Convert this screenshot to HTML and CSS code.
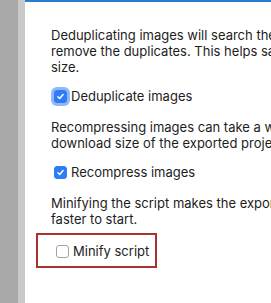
FILE: index.html
```html
<!DOCTYPE html>
<html>
<head>
    <title>Export Options</title>
    <link rel="stylesheet" href="styles.css">
</head>
<body>
    <div class="frame">
        <div class="shade"></div>
        <div class="shade-edge"></div>
        <div class="panel">
            <p class="note">Deduplicating images will search the project for identical images and<br>remove the duplicates. This helps save on the exported project's file<br>size.</p>
            <label class="option">
                <span class="box checked focused"><svg viewBox="0 0 12 12"><path d="M3.2 6.3 L5.1 8.2 L8.8 3.9" /></svg></span>
                Deduplicate images
            </label>

            <p class="note">Recompressing images can take a while, but can reduce the<br>download size of the exported project.</p>
            <label class="option">
                <span class="box checked"><svg viewBox="0 0 12 12"><path d="M3.2 6.3 L5.1 8.2 L8.8 3.9" /></svg></span>
                Recompress images
            </label>

            <p class="note">Minifying the script makes the exported project smaller and<br>faster to start.</p>
            <div class="highlight">
                <label class="option">
                    <span class="box"></span>
                    Minify script
                </label>
            </div>
        </div>
    </div>
</body>
</html>
```
FILE: styles.css
```css
body {
    margin: 0;
    font-family: Inter, "Liberation Sans", sans-serif;
    font-size: 13px;
    color: #1d1d1d;
    background-color: #fff;
}
.frame {
    display: flex;
    height: 303px;
    overflow: hidden;
}
.shade {
    width: 18px;
    background-color: #a9a9a9;
}
.shade-edge {
    width: 7px;
    background-color: #c9c9c9;
}
.panel {
    flex: 1;
    border-top: 2px solid #2a7bd4;
    padding: 25px 0 0 26px;
    white-space: nowrap;
    overflow: hidden;
}
.note {
    margin: 0;
    line-height: 16px;
}
.option {
    display: flex;
    align-items: center;
    gap: 4px;
    margin: 13px 0 15px 3px;
    line-height: 16px;
}
.box {
    width: 11px;
    height: 11px;
    border: 1px solid #a3a3a3;
    border-radius: 3px;
    background-color: #fff;
    display: flex;
}
.box svg {
    width: 11px;
    height: 11px;
}
.box path {
    fill: none;
    stroke: #fff;
    stroke-width: 1.6;
    stroke-linecap: round;
    stroke-linejoin: round;
}
.box.checked {
    background-color: #2f7cf6;
    border-color: #2f7cf6;
}
.box.focused {
    box-shadow: 0 0 0 3px #8fb8f5;
}
.highlight {
    border: 2px solid #a83232;
    width: 102px;
    margin: 6px 0 0 -15px;
    padding: 0 0 0 15px;
}
.highlight .option {
    margin: 8px 0 7px 3px;
}
```
